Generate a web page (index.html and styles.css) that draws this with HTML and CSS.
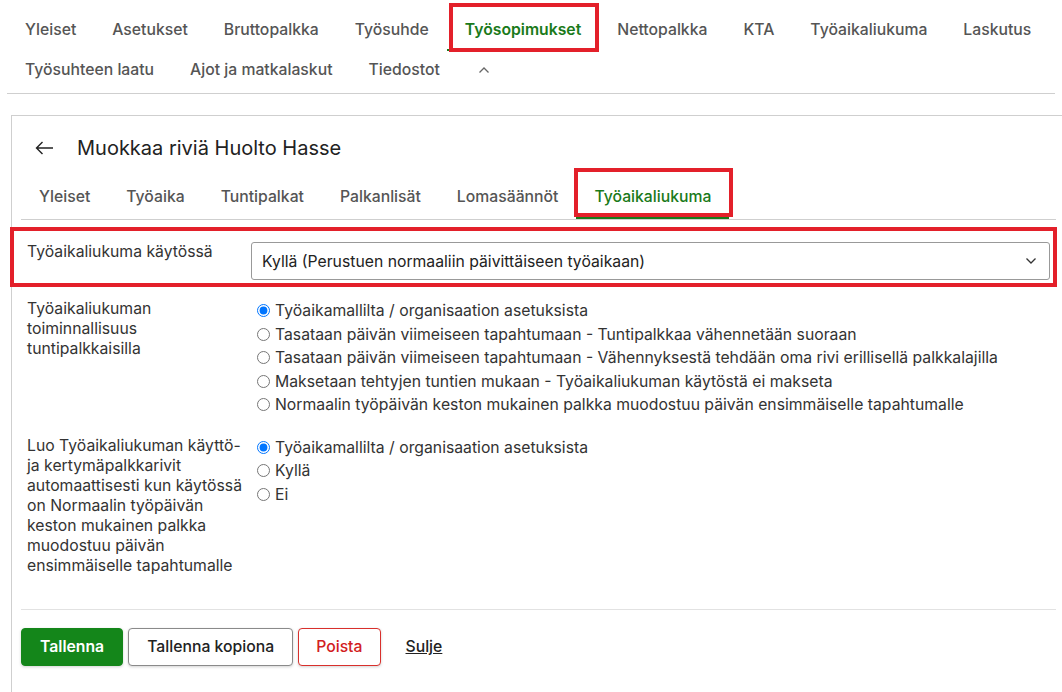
FILE: index.html
```html
<!DOCTYPE html>
<html lang="fi">
<head>
    <meta charset="UTF-8">
    <meta name="viewport" content="width=device-width, initial-scale=1.0">
    <title>Muokkaa riviä Huolto Hasse</title>
    <link rel="stylesheet" href="styles.css">
</head>
<body>
<nav class="main-tabs">
    <a class="tab">Yleiset</a>
    <a class="tab">Asetukset</a>
    <a class="tab">Bruttopalkka</a>
    <a class="tab">Työsuhde</a>
    <a class="tab active">Työsopimukset<span class="highlight"></span></a>
    <a class="tab">Nettopalkka</a>
    <a class="tab">KTA</a>
    <a class="tab">Työaikaliukuma</a>
    <a class="tab">Laskutus</a>
    <a class="tab">Työsuhteen laatu</a>
    <a class="tab">Ajot ja matkalaskut</a>
    <a class="tab">Tiedostot</a>
    <a class="tab tab-toggle" title="Piilota">
        <svg width="12" height="8" viewBox="0 0 12 8"><path d="M1.5 6.5 L6 2 L10.5 6.5" fill="none" stroke="#666" stroke-width="1.3"/></svg>
    </a>
</nav>

<section class="card">
    <header class="card-title">
        <button class="back-button" title="Takaisin">
            <svg width="19" height="14" viewBox="0 0 19 14"><path d="M18 7 H1.5 M7.5 1 L1.5 7 L7.5 13" fill="none" stroke="#222" stroke-width="1.4"/></svg>
        </button>
        <h1>Muokkaa riviä Huolto Hasse</h1>
    </header>

    <nav class="sub-tabs">
        <a class="tab">Yleiset</a>
        <a class="tab">Työaika</a>
        <a class="tab">Tuntipalkat</a>
        <a class="tab">Palkanlisät</a>
        <a class="tab">Lomasäännöt</a>
        <a class="tab active">Työaikaliukuma<span class="highlight"></span></a>
    </nav>

    <form class="edit-form">
        <div class="form-row row-enabled">
            <label class="row-label">Työaikaliukuma käytössä</label>
            <div class="select-box">
                <span>Kyllä (Perustuen normaaliin päivittäiseen työaikaan)</span>
                <svg width="12" height="8" viewBox="0 0 12 8"><path d="M1.5 1.5 L6 6 L10.5 1.5" fill="none" stroke="#333" stroke-width="1.3"/></svg>
            </div>
            <span class="highlight"></span>
        </div>

        <div class="form-row">
            <div class="row-label">Työaikaliukuman toiminnallisuus tuntipalkkaisilla</div>
            <div class="radio-group">
                <label class="radio-option"><input type="radio" name="mode" checked> Työaikamallilta / organisaation asetuksista</label>
                <label class="radio-option"><input type="radio" name="mode"> Tasataan päivän viimeiseen tapahtumaan - Tuntipalkkaa vähennetään suoraan</label>
                <label class="radio-option"><input type="radio" name="mode"> Tasataan päivän viimeiseen tapahtumaan - Vähennyksestä tehdään oma rivi erillisellä palkkalajilla</label>
                <label class="radio-option"><input type="radio" name="mode"> Maksetaan tehtyjen tuntien mukaan - Työaikaliukuman käytöstä ei makseta</label>
                <label class="radio-option"><input type="radio" name="mode"> Normaalin työpäivän keston mukainen palkka muodostuu päivän ensimmäiselle tapahtumalle</label>
            </div>
        </div>

        <div class="form-row">
            <div class="row-label">Luo Työaikaliukuman käyttö- ja kertymäpalkkarivit automaattisesti kun käytössä on Normaalin työpäivän keston mukainen palkka muodostuu päivän ensimmäiselle tapahtumalle</div>
            <div class="radio-group">
                <label class="radio-option"><input type="radio" name="rows" checked> Työaikamallilta / organisaation asetuksista</label>
                <label class="radio-option"><input type="radio" name="rows"> Kyllä</label>
                <label class="radio-option"><input type="radio" name="rows"> Ei</label>
            </div>
        </div>

        <div class="form-actions">
            <button type="button" class="btn btn-save">Tallenna</button>
            <button type="button" class="btn btn-copy">Tallenna kopiona</button>
            <button type="button" class="btn btn-delete">Poista</button>
            <button type="button" class="btn-link">Sulje</button>
        </div>
    </form>
</section>
</body>
</html>
```

FILE: styles.css
```css
body {
    font-family: Inter, "Noto Sans", sans-serif;
    font-size: 15.75px;
    margin: 0;
    background-color: #fff;
    color: #333;
    overflow: hidden;
}
a { cursor: pointer; }

/* top level tabs */
.main-tabs {
    display: flex;
    flex-wrap: wrap;
    margin-left: 7px;
    margin-right: 7px;
    padding-top: 11px;
    padding-bottom: 2px;
    border-bottom: 1px solid #cfcfcf;
}
.tab {
    position: relative;
    display: flex;
    align-items: center;
    padding: 9px 18px;
    line-height: 20px;
    font-weight: 500;
    color: #555;
    border-bottom: 2px solid transparent;
}
.tab.active {
    color: #1a7a1a;
    font-weight: 600;
    border-bottom-color: #1a7a1a;
}
.tab-toggle { padding-left: 20px; padding-right: 16px; }

/* red marker frames */
.highlight {
    position: absolute;
    border: 4px solid #e3202a;
    pointer-events: none;
}
.main-tabs .highlight { top: -8px; bottom: -3px; left: 2px; right: 0; }
.sub-tabs .highlight { top: -10px; bottom: -1px; left: -2px; right: -4px; }

/* edit card */
.card {
    margin-top: 21px;
    margin-left: 11px;
    padding-left: 9px;
    padding-right: 6px;
    padding-bottom: 40px;
    border-top: 1px solid #cfcfcf;
    border-left: 1px solid #cfcfcf;
}
.card-title {
    display: flex;
    align-items: center;
    padding-top: 20px;
    padding-left: 14px;
    height: 24px;
}
.back-button {
    display: flex;
    align-items: center;
    background: none;
    border: none;
    padding: 0;
    margin-right: 23px;
    cursor: pointer;
}
.card-title h1 {
    margin: 0;
    font-size: 20px;
    font-weight: 400;
    color: #222;
    line-height: 24px;
}
.sub-tabs {
    display: flex;
    margin-top: 18px;
    border-bottom: 1px solid #cfcfcf;
}
.sub-tabs .tab { border-bottom-width: 3px; }
.sub-tabs .tab.active { font-weight: 500; }

/* form */
.edit-form { padding-top: 22px; }
.form-row {
    position: relative;
    display: grid;
    grid-template-columns: 224px 1fr;
    padding-left: 6px;
    padding-right: 6px;
    margin-bottom: 19px;
}
.row-label {
    line-height: 20px;
    color: #333;
    padding-right: 4px;
}
.row-enabled .highlight { top: -15px; bottom: -7px; left: -11px; right: -1px; }
.select-box {
    display: flex;
    justify-content: space-between;
    align-items: center;
    height: 36px;
    padding-left: 10px;
    padding-right: 12px;
    border: 1px solid #999;
    border-radius: 3px;
    color: #222;
}
.radio-group {
    display: flex;
    flex-direction: column;
}
.radio-option {
    display: flex;
    align-items: center;
    min-height: 23.5px;
    white-space: nowrap;
    color: #333;
}
.radio-option input {
    margin: 0 5px 0 6px;
    width: 13px;
    height: 13px;
}

/* buttons */
.form-actions {
    display: flex;
    align-items: center;
    margin-top: 33px;
    padding-top: 18px;
    border-top: 1px solid #e2e2e2;
}
.btn {
    height: 38px;
    padding: 0 18px;
    margin-right: 5px;
    font-family: inherit;
    font-size: 15.75px;
    font-weight: 500;
    border-radius: 4px;
    background-color: #fff;
    box-shadow: 0 1px 3px rgba(0,0,0,0.18);
    cursor: pointer;
}
.btn-save {
    background-color: #14861a;
    border: 1px solid #14861a;
    color: #fff;
    font-weight: 600;
    padding: 0 18px;
}
.btn-copy { border: 1px solid #8a8a8a; color: #222; }
.btn-delete { border: 1px solid #d8302c; color: #d2201e; padding: 0 17px; }
.btn-link {
    background: none;
    border: none;
    padding: 0 20px;
    font-family: inherit;
    font-size: 15.75px;
    font-weight: 500;
    color: #222;
    text-decoration: underline;
    cursor: pointer;
}
```
